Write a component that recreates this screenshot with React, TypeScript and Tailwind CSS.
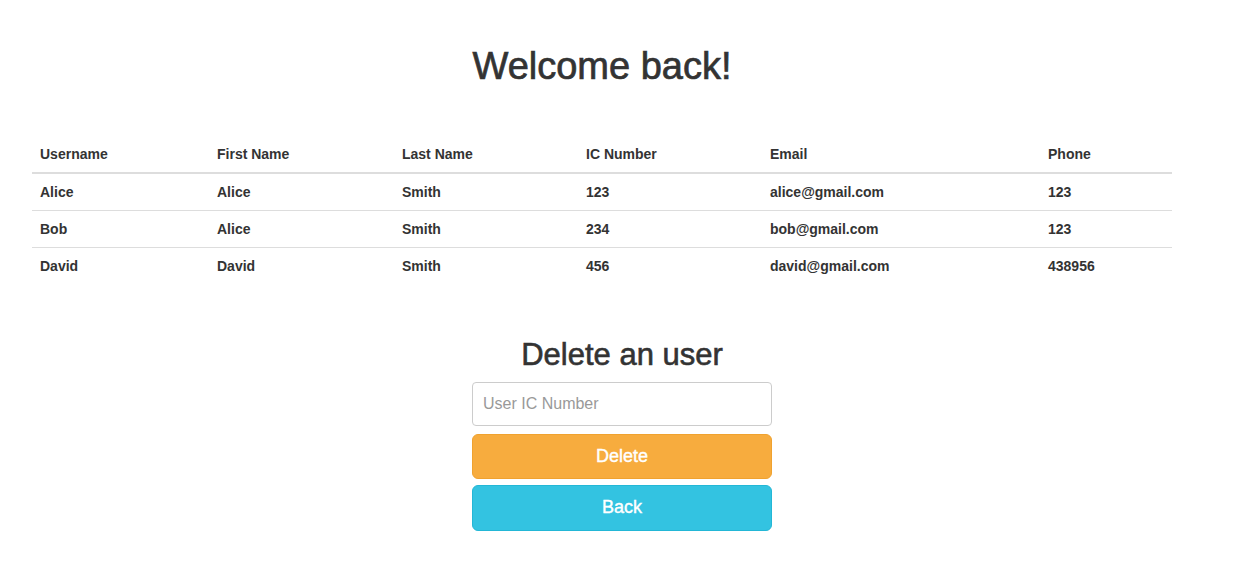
import React from "react";

const rows = [
  ["Alice", "Alice", "Smith", "123", "alice@gmail.com", "123"],
  ["Bob", "Alice", "Smith", "234", "bob@gmail.com", "123"],
  ["David", "David", "Smith", "456", "david@gmail.com", "438956"],
];
const headers = ["Username", "First Name", "Last Name", "IC Number", "Email", "Phone"];
const widths = ["w-[177px]", "w-[185px]", "w-[184px]", "w-[184px]", "w-[278px]", "w-[132px]"];

export default function App() {
  return (
    <div className="min-h-[570px] bg-white text-[#333] font-['Liberation_Sans',Arial,sans-serif]">
      <div className="w-[1140px] ml-[32px]">
        <h1 className="text-[38px] leading-[40px] text-center pt-[46px] [-webkit-text-stroke:0.7px_#333]">Welcome back!</h1>
        <table className="w-full mt-[49px] border-collapse text-[14px] font-bold">
          <thead>
            <tr className="border-b-2 border-[#ddd]">
              {headers.map((h, i) => (
                <th key={h} className={`${widths[i]} text-left px-2 pt-[8px] pb-[8px] h-[38px] align-bottom leading-[20px]`}>{h}</th>
              ))}
            </tr>
          </thead>
          <tbody>
            {rows.map((r, ri) => (
              <tr key={ri} className={ri > 0 ? "border-t border-[#ddd]" : ""}>
                {r.map((c, ci) => (
                  <td key={ci} className="px-2 py-[8px] leading-[20px] h-[37px]">{c}</td>
                ))}
              </tr>
            ))}
          </tbody>
        </table>
      </div>
      <div className="w-[300px] ml-[472px] mt-[53px] flex flex-col">
        <h2 className="text-[31px] leading-[33px] text-center [-webkit-text-stroke:0.6px_#333]">Delete an user</h2>
        <input
          placeholder="User IC Number"
          className="mt-[11px] h-[44px] border border-[#ccc] rounded-[4px] px-[10px] text-[16px] text-[#555] placeholder:text-[#999] outline-none"
        />
        <button className="mt-[8px] h-[45px] rounded-[6px] bg-[#f7ac3e] border border-[#f0a22f] text-white text-[18px] [-webkit-text-stroke:0.4px_#fff]">Delete</button>
        <button className="mt-[6px] h-[46px] rounded-[6px] bg-[#33c3e1] border border-[#23b7d6] text-white text-[18px] [-webkit-text-stroke:0.4px_#fff]">Back</button>
      </div>
    </div>
  );
}
